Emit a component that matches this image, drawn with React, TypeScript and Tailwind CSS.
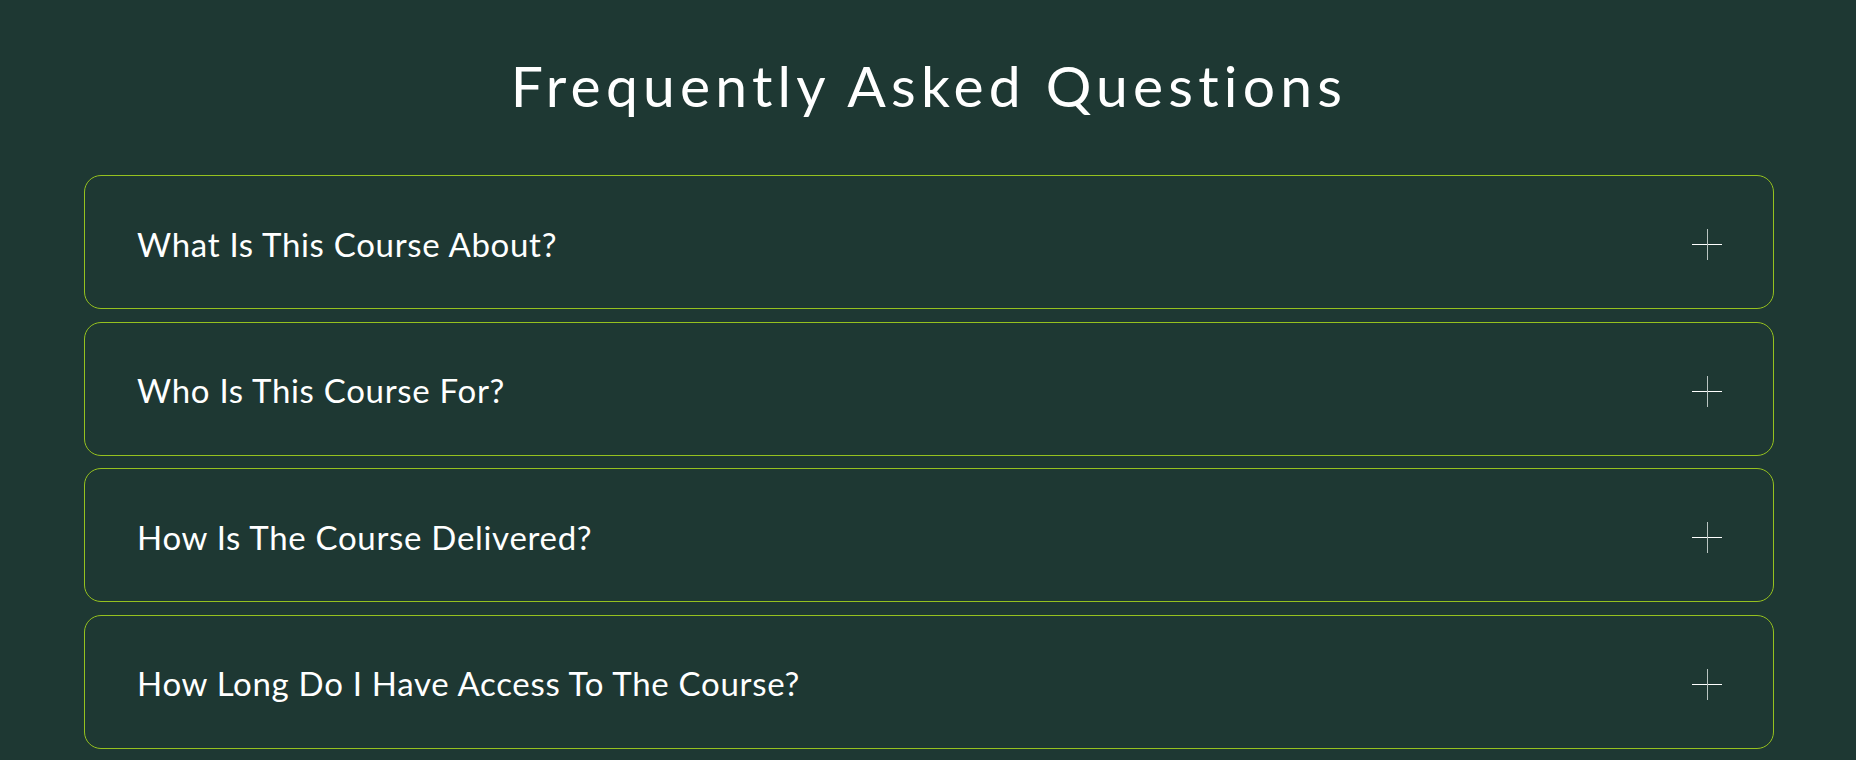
import { useState } from 'react';

const faqs = [
  {
    q: 'What Is This Course About?',
    a: 'A practical, step-by-step programme that takes you from the basics to confident, real-world skills.',
  },
  {
    q: 'Who Is This Course For?',
    a: 'Anyone who wants to learn, whether you are just starting out or looking to sharpen what you already know.',
  },
  {
    q: 'How Is The Course Delivered?',
    a: 'Entirely online, through recorded video lessons, downloadable resources and live Q&A sessions.',
  },
  {
    q: 'How Long Do I Have Access To The Course?',
    a: 'You get lifetime access, including every future update to the course material.',
  },
];

const PlusIcon = ({ open }: { open: boolean }) => (
  <span className="relative block h-[31px] w-[30px] shrink-0">
    <span className="absolute left-0 top-[15px] h-px w-[30px] bg-white" />
    {!open && <span className="absolute left-[14.5px] top-0 h-[31px] w-[1.5px] bg-[#b9c4c1]" />}
  </span>
);

const FaqItem = ({ q, a }: { q: string; a: string }) => {
  const [open, setOpen] = useState(false);

  return (
    <div className="rounded-[17px] border border-[#95c11f] bg-[#1e3833]">
      <button
        onClick={() => setOpen(!open)}
        className="flex h-[132px] w-full items-center justify-between pl-[52px] pr-[51px] text-left"
      >
        <span className="pt-[4px] text-[33px] leading-none tracking-[0.7px] text-white">{q}</span>
        <span className="pt-[5px]">
          <PlusIcon open={open} />
        </span>
      </button>
      {open && (
        <p className="px-[52px] pb-8 text-[20px] leading-relaxed text-[#d4ddd9]">{a}</p>
      )}
    </div>
  );
};

export default function App() {
  return (
    <div
      className="min-h-[760px] bg-[#1e3833] pb-10 pl-[84px] pr-[82px] pt-[57px]"
      style={{ fontFamily: 'Lato, "Open Sans", sans-serif' }}
    >
      <h2 className="text-center text-[57px] leading-none tracking-[5.2px] text-white">
        Frequently Asked Questions
      </h2>

      <div className="mt-[61px] flex flex-col gap-[12.67px]">
        {faqs.map((item) => (
          <FaqItem key={item.q} q={item.q} a={item.a} />
        ))}
      </div>
    </div>
  );
}
